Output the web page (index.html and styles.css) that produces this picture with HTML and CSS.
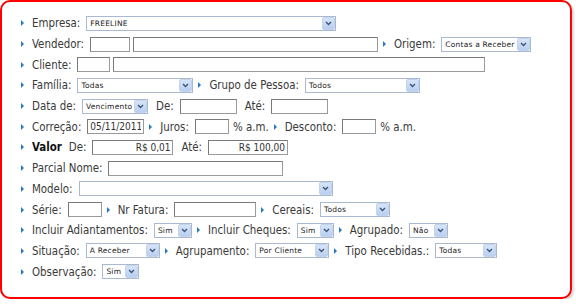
FILE: index.html
```html
<!DOCTYPE html>
<html lang="pt-BR">
<head>
  <meta charset="UTF-8">
  <title>Filtro de Contas</title>
  <link rel="stylesheet" href="styles.css">
</head>
<body>
  <div class="panel">
    <div class="row">
      <span class="bul first"></span><span class="lbl">Empresa:</span>
      <div class="sel" style="width:250px">FREELINE<span class="arr"><svg width="7" height="5" viewBox="0 0 7 5"><path d="M1 1l2.5 2.5L6 1" fill="none" stroke="#3d5478" stroke-width="1.4"/></svg></span></div>
    </div>
    <div class="row">
      <span class="bul first"></span><span class="lbl">Vendedor:</span>
      <input class="txt" style="width:40px">
      <input class="txt gap" style="width:245px">
      <span class="bul"></span><span class="lbl">Origem:</span>
      <div class="sel" style="width:90px">Contas a Receber<span class="arr"><svg width="7" height="5" viewBox="0 0 7 5"><path d="M1 1l2.5 2.5L6 1" fill="none" stroke="#3d5478" stroke-width="1.4"/></svg></span></div>
    </div>
    <div class="row">
      <span class="bul first"></span><span class="lbl">Cliente:</span>
      <input class="txt" style="width:33px">
      <input class="txt gap" style="width:372px">
    </div>
    <div class="row">
      <span class="bul first"></span><span class="lbl">Família:</span>
      <div class="sel" style="width:116px">Todas<span class="arr"><svg width="7" height="5" viewBox="0 0 7 5"><path d="M1 1l2.5 2.5L6 1" fill="none" stroke="#3d5478" stroke-width="1.4"/></svg></span></div>
      <span class="bul"></span><span class="lbl">Grupo de Pessoa:</span>
      <div class="sel" style="width:115px">Todos<span class="arr"><svg width="7" height="5" viewBox="0 0 7 5"><path d="M1 1l2.5 2.5L6 1" fill="none" stroke="#3d5478" stroke-width="1.4"/></svg></span></div>
    </div>
    <div class="row">
      <span class="bul first"></span><span class="lbl">Data de:</span>
      <div class="sel" style="width:66px">Vencimento<span class="arr"><svg width="7" height="5" viewBox="0 0 7 5"><path d="M1 1l2.5 2.5L6 1" fill="none" stroke="#3d5478" stroke-width="1.4"/></svg></span></div>
      <span class="lbl sub">De:</span>
      <input class="txt" style="width:57px">
      <span class="lbl sub">Até:</span>
      <input class="txt" style="width:57px">
    </div>
    <div class="row">
      <span class="bul first"></span><span class="lbl">Correção:</span>
      <input class="txt" style="width:57px" value="05/11/2011">
      <span class="bul"></span><span class="lbl">Juros:</span>
      <input class="txt" style="width:34px">
      <span class="unit">% a.m.</span>
      <span class="bul"></span><span class="lbl">Desconto:</span>
      <input class="txt" style="width:34px">
      <span class="unit">% a.m.</span>
    </div>
    <div class="row">
      <span class="bul first"></span><span class="lbl strong">Valor</span>
      <span class="lbl">De:</span>
      <input class="txt num" style="width:81px" value="R$ 0,01">
      <span class="lbl sub">Até:</span>
      <input class="txt num" style="width:80px" value="R$ 100,00">
    </div>
    <div class="row">
      <span class="bul first"></span><span class="lbl">Parcial Nome:</span>
      <input class="txt" style="width:175px">
    </div>
    <div class="row">
      <span class="bul first"></span><span class="lbl">Modelo:</span>
      <div class="sel" style="width:254px"><span class="arr"><svg width="7" height="5" viewBox="0 0 7 5"><path d="M1 1l2.5 2.5L6 1" fill="none" stroke="#3d5478" stroke-width="1.4"/></svg></span></div>
    </div>
    <div class="row">
      <span class="bul first"></span><span class="lbl">Série:</span>
      <input class="txt" style="width:34px">
      <span class="bul"></span><span class="lbl">Nr Fatura:</span>
      <input class="txt" style="width:82px">
      <span class="bul"></span><span class="lbl">Cereais:</span>
      <div class="sel" style="width:70px">Todos<span class="arr"><svg width="7" height="5" viewBox="0 0 7 5"><path d="M1 1l2.5 2.5L6 1" fill="none" stroke="#3d5478" stroke-width="1.4"/></svg></span></div>
    </div>
    <div class="row">
      <span class="bul first"></span><span class="lbl">Incluir Adiantamentos:</span>
      <div class="sel" style="width:38px">Sim<span class="arr"><svg width="7" height="5" viewBox="0 0 7 5"><path d="M1 1l2.5 2.5L6 1" fill="none" stroke="#3d5478" stroke-width="1.4"/></svg></span></div>
      <span class="bul"></span><span class="lbl">Incluir Cheques:</span>
      <div class="sel" style="width:37px">Sim<span class="arr"><svg width="7" height="5" viewBox="0 0 7 5"><path d="M1 1l2.5 2.5L6 1" fill="none" stroke="#3d5478" stroke-width="1.4"/></svg></span></div>
      <span class="bul"></span><span class="lbl">Agrupado:</span>
      <div class="sel" style="width:39px">Não<span class="arr"><svg width="7" height="5" viewBox="0 0 7 5"><path d="M1 1l2.5 2.5L6 1" fill="none" stroke="#3d5478" stroke-width="1.4"/></svg></span></div>
    </div>
    <div class="row">
      <span class="bul first"></span><span class="lbl">Situação:</span>
      <div class="sel" style="width:74px">A Receber<span class="arr"><svg width="7" height="5" viewBox="0 0 7 5"><path d="M1 1l2.5 2.5L6 1" fill="none" stroke="#3d5478" stroke-width="1.4"/></svg></span></div>
      <span class="bul"></span><span class="lbl">Agrupamento:</span>
      <div class="sel" style="width:74px">Por Cliente<span class="arr"><svg width="7" height="5" viewBox="0 0 7 5"><path d="M1 1l2.5 2.5L6 1" fill="none" stroke="#3d5478" stroke-width="1.4"/></svg></span></div>
      <span class="bul"></span><span class="lbl">Tipo Recebidas.:</span>
      <div class="sel" style="width:62px">Todas<span class="arr"><svg width="7" height="5" viewBox="0 0 7 5"><path d="M1 1l2.5 2.5L6 1" fill="none" stroke="#3d5478" stroke-width="1.4"/></svg></span></div>
    </div>
    <div class="row">
      <span class="bul first"></span><span class="lbl">Observação:</span>
      <div class="sel" style="width:37px">Sim<span class="arr"><svg width="7" height="5" viewBox="0 0 7 5"><path d="M1 1l2.5 2.5L6 1" fill="none" stroke="#3d5478" stroke-width="1.4"/></svg></span></div>
    </div>
  </div>
</body>
</html>
```

FILE: styles.css
```css
body {
  margin: 0;
  padding: 0;
  background-color: #fff;
  font-family: "DejaVu Sans Condensed", "DejaVu Sans", sans-serif;
  font-size: 11.4px;
  color: #3a3a3a;
}
.panel {
  box-sizing: border-box;
  width: 572px;
  height: 299px;
  border: 2px solid #ff0000;
  border-radius: 10px;
  box-shadow: 2px 2px 2px #d8d8d8;
  padding: 11px 0 0 19px;
}
.row {
  display: flex;
  align-items: center;
  height: 20.7px;
  white-space: nowrap;
}
.bul {
  width: 0;
  height: 0;
  border-left: 3px solid #2a78c8;
  border-top: 3px solid transparent;
  border-bottom: 3px solid transparent;
  margin: 0 8px 0 5px;
}
.bul.first {
  margin-left: 0;
}
.lbl {
  margin-right: 6px;
}
.lbl.sub {
  margin-left: 8px;
}
.lbl.strong {
  font-weight: bold;
  color: #111;
  margin-right: 7px;
}
.unit {
  margin-left: 4px;
}
.txt {
  box-sizing: border-box;
  height: 15px;
  margin: 0;
  padding: 0 2px;
  border: 1px solid #9a9a9a;
  border-top-color: #7a7a7a;
  border-left-color: #7a7a7a;
  font-family: "DejaVu Sans Condensed", "DejaVu Sans", sans-serif;
  font-size: 10px;
  color: #333;
  background: #fff;
}
.txt.gap {
  margin-left: 3px;
}
.txt.num {
  text-align: right;
}
.sel {
  box-sizing: border-box;
  height: 15px;
  border: 1px solid #a9b9d1;
  background: #fff;
  display: flex;
  align-items: center;
  justify-content: space-between;
  padding-left: 3px;
  font-family: "DejaVu Sans", sans-serif;
  font-size: 7.5px;
  color: #222;
  letter-spacing: 0.2px;
}
.arr {
  box-sizing: border-box;
  width: 13px;
  height: 13px;
  margin-left: auto;
  background: linear-gradient(#d6e4f8, #b9cff0);
  border: 1px solid #c3d3ea;
  border-radius: 2px;
  display: flex;
  align-items: center;
  justify-content: center;
}
```
